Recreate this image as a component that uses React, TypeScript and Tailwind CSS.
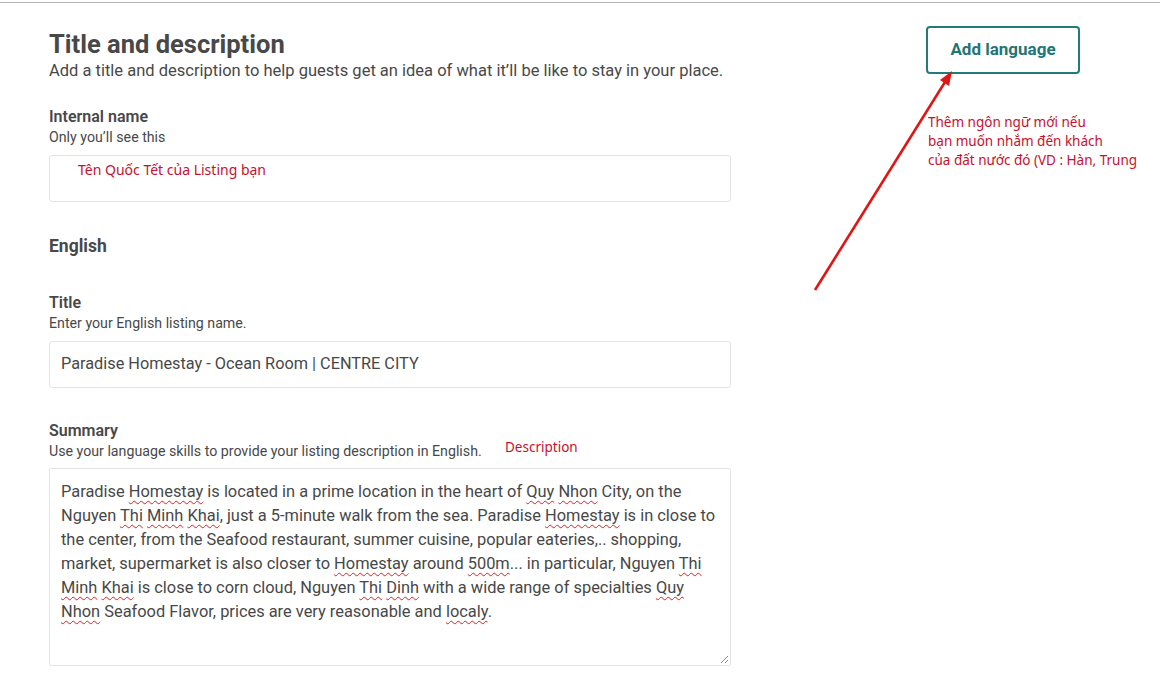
import React from "react";

const misspelled = new Set(["Homestay", "Quy", "Nhon", "Thi", "Minh", "Khai", "500m", "Dinh", "localy"]);

const summaryLines = [
  "Paradise Homestay is located in a prime location in the heart of Quy Nhon City, on the",
  "Nguyen Thi Minh Khai, just a 5-minute walk from the sea. Paradise Homestay is in close to",
  "the center, from the Seafood restaurant, summer cuisine, popular eateries,.. shopping,",
  "market, supermarket is also closer to Homestay around 500m... in particular, Nguyen Thi",
  "Minh Khai is close to corn cloud, Nguyen Thi Dinh with a wide range of specialties Quy",
  "Nhon Seafood Flavor, prices are very reasonable and localy.",
];

function SpellLine({ text }: { text: string }) {
  const parts = text.split(/([A-Za-z0-9]+)/);
  return (
    <div className="whitespace-pre">
      {parts.map((p, i) =>
        misspelled.has(p) ? (
          <span key={i} className="underline decoration-wavy decoration-[#e02020] decoration-1 underline-offset-[3px]">
            {p}
          </span>
        ) : (
          <span key={i}>{p}</span>
        )
      )}
    </div>
  );
}

function Label({ title, hint, note }: { title: string; hint: string; note?: string }) {
  return (
    <div>
      <div className="text-[16px] leading-[20px] font-semibold text-[#484848]">{title}</div>
      <div className="relative h-[20px] text-[14.2px] leading-[20px] text-[#484848]">
        <span>{hint}</span>
        {note && (
          <span className="absolute left-[456px] top-[-4px] font-['Noto_Sans',sans-serif] text-[13.5px] text-[#c8102e]">
            {note}
          </span>
        )}
      </div>
    </div>
  );
}

export default function App() {
  return (
    <div className="relative min-h-[695px] bg-white font-['Roboto',sans-serif] text-[#484848] overflow-hidden">
      <div className="h-[2px]" />
      <div className="border-t border-[#b5b5b5]" />

      <div className="flex pl-[49px]">
        {/* Left form column */}
        <div className="w-[682px] pt-[26px]">
          <h1 className="text-[25.5px] leading-[30px] font-bold">Title and description</h1>
          <p className="text-[16.5px] leading-[22px] mt-[1px]">
            Add a title and description to help guests get an idea of what it’ll be like to stay in your place.
          </p>

          <div className="mt-[25px]">
            <Label title="Internal name" hint="Only you’ll see this" />
            <div className="mt-[8px] h-[47px] border border-[#e4e4e4] rounded-[3px] pl-[28px] pt-[2px]">
              <span className="font-['Noto_Sans',sans-serif] text-[14px] text-[#c8102e]">Tên Quốc Tết của Listing bạn</span>
            </div>
          </div>

          <h2 className="mt-[32px] text-[17.5px] leading-[24px] font-bold">English</h2>

          <div className="mt-[35px]">
            <Label title="Title" hint="Enter your English listing name." />
            <div className="mt-[8px] h-[47px] border border-[#e4e4e4] rounded-[3px] px-[11px] flex items-center text-[16.3px]">
              Paradise Homestay - Ocean Room | CENTRE CITY
            </div>
          </div>

          <div className="mt-[33px]">
            <Label title="Summary" hint="Use your language skills to provide your listing description in English." note="Description" />
            <div className="relative mt-[7px] h-[198px] border border-[#e4e4e4] rounded-[2px] px-[11px] pt-[11px] text-[16.4px] leading-[24px]">
              {summaryLines.map((l, i) => (
                <SpellLine key={i} text={l} />
              ))}
              <svg className="absolute right-[1px] bottom-[1px]" width="9" height="9" viewBox="0 0 9 9">
                <path d="M8 1 L1 8 M8 5 L5 8" stroke="#8a8a8a" strokeWidth="1" />
              </svg>
            </div>
          </div>
        </div>

        {/* Right column */}
        <div className="ml-[195px] pt-[23px] shrink-0">
          <button className="w-[154px] h-[48px] border-2 border-[#237a78] rounded-[4px] text-[17px] font-bold text-[#1f7675]">
            Add language
          </button>
          <div className="mt-[39px] ml-[2px] font-['Noto_Sans',sans-serif] text-[13.5px] leading-[19px] text-[#c8102e] whitespace-nowrap">
            <div>Thêm ngôn ngữ mới nếu</div>
            <div>bạn muốn nhắm đến khách</div>
            <div>của đất nước đó (VD : Hàn, Trung</div>
          </div>
        </div>
      </div>

      {/* annotation arrow */}
      <svg className="absolute left-0 top-0 pointer-events-none" width="1160" height="695">
        <line x1="815" y1="290" x2="945" y2="82" stroke="#e01616" strokeWidth="2.6" />
        <polygon points="952,71 949,86 940,80" fill="#e01616" />
      </svg>
    </div>
  );
}
